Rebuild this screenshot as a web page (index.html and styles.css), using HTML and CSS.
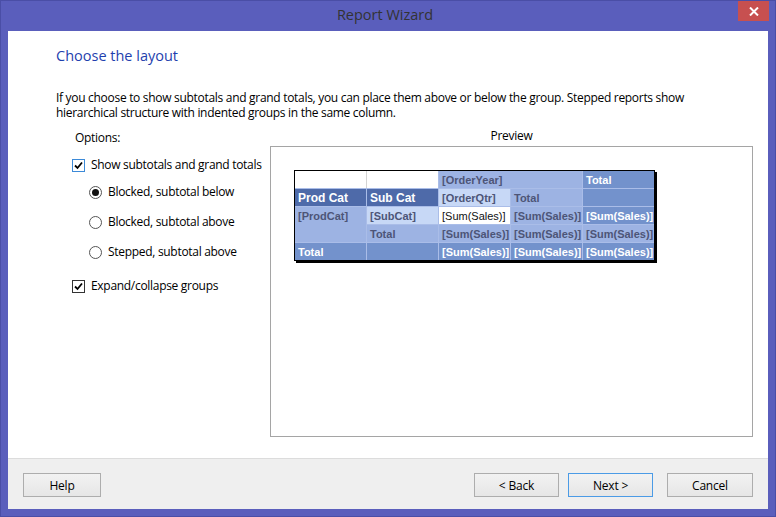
FILE: index.html
```html
<!DOCTYPE html>
<html>
<head>
<meta charset="utf-8">
<link rel="stylesheet" href="styles.css">
</head>
<body>
<div class="window">
  <div class="titlebar">
    <span></span>
    <span class="title">Report Wizard</span>
    <button class="close" aria-label="Close">
      <svg width="10" height="9" viewBox="0 0 10 9"><path d="M1 0.5 L9 8.5 M9 0.5 L1 8.5" stroke="#fff" stroke-width="2"/></svg>
    </button>
  </div>
  <div class="client">
    <div class="content">
      <h1 class="heading">Choose the layout</h1>
      <p class="intro">If you choose to show subtotals and grand totals, you can place them above or below the group. Stepped reports show hierarchical structure with indented groups in the same column.</p>
      <div class="main">
        <div class="label-options">Options:</div>
        <div class="label-preview">Preview</div>
        <div class="options">
          <label class="check focus"><span class="box"><svg width="11" height="11" viewBox="0 0 11 11"><path d="M2 5.5 L4.5 8 L9 2.5" fill="none" stroke="#000" stroke-width="1.8"/></svg></span>Show subtotals and grand totals</label>
          <label class="radio r1"><span class="dot on"></span>Blocked, subtotal below</label>
          <label class="radio"><span class="dot"></span>Blocked, subtotal above</label>
          <label class="radio"><span class="dot"></span>Stepped, subtotal above</label>
          <label class="check c2"><span class="box"><svg width="11" height="11" viewBox="0 0 11 11"><path d="M2 5.5 L4.5 8 L9 2.5" fill="none" stroke="#000" stroke-width="1.8"/></svg></span>Expand/collapse groups</label>
        </div>
        <div class="preview">
          <div class="grid">
            <div class="c white"></div>
            <div class="c white"></div>
            <div class="c light span2">[OrderYear]</div>
            <div class="c mid w">Total</div>

            <div class="c dark big">Prod Cat</div>
            <div class="c dark big">Sub Cat</div>
            <div class="c pale">[OrderQtr]</div>
            <div class="c light">Total</div>
            <div class="c mid"></div>

            <div class="c light rows2">[ProdCat]</div>
            <div class="c pale">[SubCat]</div>
            <div class="c white normal">[Sum(Sales)]</div>
            <div class="c light">[Sum(Sales)]</div>
            <div class="c mid w">[Sum(Sales)]</div>

            <div class="c light">Total</div>
            <div class="c light">[Sum(Sales)]</div>
            <div class="c light">[Sum(Sales)]</div>
            <div class="c light">[Sum(Sales)]</div>

            <div class="c mid w">Total</div>
            <div class="c mid"></div>
            <div class="c mid w">[Sum(Sales)]</div>
            <div class="c mid w">[Sum(Sales)]</div>
            <div class="c mid w">[Sum(Sales)]</div>
          </div>
        </div>
      </div>
    </div>
    <div class="footer">
      <button class="btn help">Help</button>
      <span class="spacer"></span>
      <button class="btn">&lt; Back</button>
      <button class="btn next">Next &gt;</button>
      <button class="btn cancel">Cancel</button>
    </div>
  </div>
</div>
</body>
</html>
```

FILE: styles.css
```css
* { box-sizing: border-box; }
html, body { margin: 0; padding: 0; }
body {
  width: 776px;
  height: 517px;
  overflow: hidden;
  font-family: "Open Sans", "Noto Sans", sans-serif;
  font-size: 12px;
  letter-spacing: -0.3px;
  color: #000;
}
.window {
  width: 776px;
  height: 517px;
  background: #5a5ebc;
  border: 1px solid #4a4ea6;
  display: flex;
  flex-direction: column;
}
.titlebar {
  height: 30px;
  display: grid;
  grid-template-columns: 1fr auto 1fr;
  padding-right: 6px;
}
.title {
  font-size: 14.5px;
  letter-spacing: 0;
  color: #333;
  line-height: 28px;
}
.close {
  justify-self: end;
  align-self: start;
  width: 31px;
  height: 20px;
  margin: 0;
  padding: 0;
  border: none;
  background: #c75050;
  display: flex;
  align-items: center;
  justify-content: center;
}
.client {
  flex: 1;
  margin: 0 7px 7px 7px;
  display: flex;
  flex-direction: column;
  background: #fff;
}
.content {
  flex: 1;
  padding: 15px 14px 0 48px;
}
.heading {
  margin: 0;
  font-weight: normal;
  font-size: 14.5px;
  letter-spacing: 0;
  line-height: 20px;
  color: #1f3fae;
}
.intro {
  margin: 24px 0 0 0;
  line-height: 15px;
  width: 660px;
}
.main {
  margin-top: 10px;
  display: grid;
  grid-template-columns: 214px 483px;
  grid-template-rows: 16px 291px;
}
.label-options { padding-left: 19px; line-height: 14px; padding-top: 1px; }
.label-preview { text-align: center; line-height: 14px; margin-top: -1px; }
.options {
  display: flex;
  flex-direction: column;
  padding-top: 11px;
}
.check, .radio {
  display: flex;
  align-items: center;
  height: 16px;
  line-height: 16px;
  white-space: nowrap;
}
.check { padding-left: 16px; }
.radio { padding-left: 33px; margin-top: 14px; }
.r1 { margin-top: 11px; }
.c2 { margin-top: 18px; }
.box {
  flex: none;
  width: 13px;
  height: 13px;
  border: 1px solid #333;
  background: #fff;
  margin-right: 6px;
  display: flex;
  align-items: center;
  justify-content: center;
}
.focus .box { border-color: #3c8ad8; }
.dot {
  flex: none;
  width: 13px;
  height: 13px;
  border: 1px solid #555;
  border-radius: 50%;
  margin-right: 6px;
  display: flex;
  align-items: center;
  justify-content: center;
}
.dot.on::after {
  content: "";
  width: 7px;
  height: 7px;
  border-radius: 50%;
  background: #111;
}
.preview {
  border: 1px solid #a5a5a5;
  padding: 23px 0 0 23px;
}
.grid {
  width: 361px;
  display: grid;
  grid-template-columns: repeat(5, 71px);
  grid-auto-rows: 17px;
  gap: 1px;
  background: #aabde8;
  border: 1px solid #000;
  box-shadow: 2px 2px 0 #000;
  font-family: "Liberation Sans", Arial, sans-serif;
  font-weight: bold;
  font-size: 11px;
  letter-spacing: 0;
  color: #4d5577;
}
.c {
  padding-left: 3px;
  padding-top: 1px;
  line-height: 17px;
  white-space: nowrap;
  overflow: hidden;
}
.white { background: #fff; }
.white:first-child { box-shadow: 1px 0 0 #d4d4d4; }
.light { background: #9db3e3; }
.pale { background: #c7d8f6; }
.mid { background: #7392cc; }
.dark { background: #4e6aa9; color: #fff; }
.w { color: #fff; }
.big { font-size: 12px; }
.normal { font-weight: normal; color: #111; }
.span2 { grid-column: span 2; }
.rows2 { grid-row: span 2; }
.footer {
  height: 51px;
  border-top: 1px solid #dcdcdc;
  background: #efefef;
  display: flex;
  align-items: flex-start;
  padding: 14px 15px 0 15px;
}
.spacer { flex: 1; }
.btn {
  height: 24px;
  width: 85px;
  font-family: "Open Sans", "Noto Sans", sans-serif;
  font-size: 12px;
  letter-spacing: -0.2px;
  color: #000;
  border: 1px solid #adadad;
  background: linear-gradient(#f2f2f2, #e6e6e6);
  padding: 0;
  margin: 0;
}
.help { width: 78px; }
.next { margin-left: 9px; border-color: #4b9be6; }
.cancel { margin-left: 14px; width: 86px; }
```
